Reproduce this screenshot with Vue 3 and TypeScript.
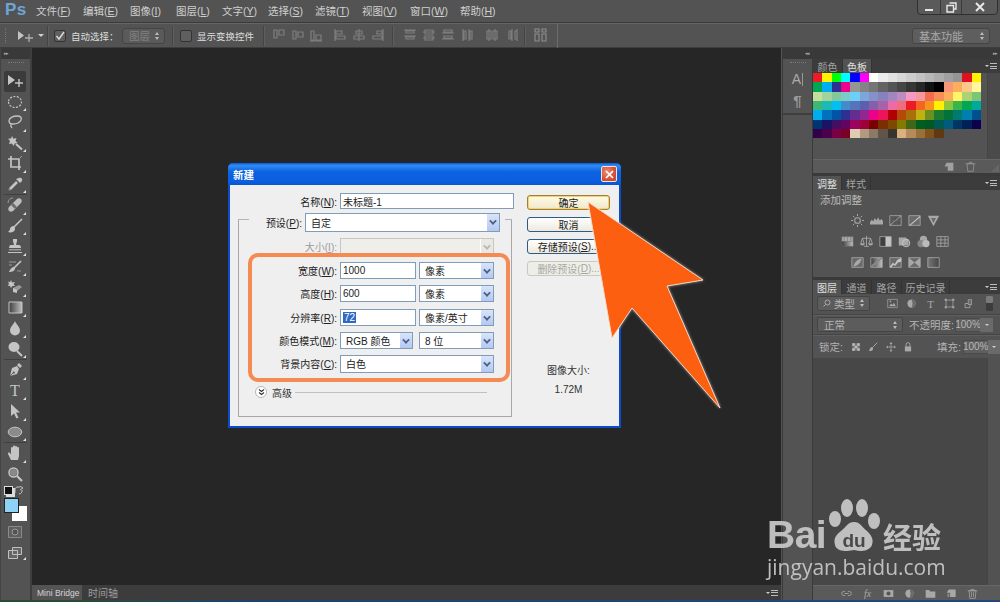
<script setup lang="ts">
type Shape = { d: string; fill?: string; stroke?: string; sw?: number; dash?: string; op?: number }
type Tool = { id: string; shapes: Shape[]; flyout?: boolean; active?: boolean; sepBefore?: boolean; label?: string }

const L = '#c4c4c4'
const M = '#9a9a9a'
const f = (d: string, fill = L, op = 1): Shape => ({ d, fill, op })
const s = (d: string, stroke = L, sw = 1.2, dash?: string): Shape => ({ d, stroke, sw, dash, fill: 'none' })
const oval = (cx: number, cy: number, rx: number, ry: number) =>
  `M${cx - rx} ${cy}a${rx} ${ry} 0 1 0 ${rx * 2} 0a${rx} ${ry} 0 1 0 ${-rx * 2} 0z`

const tools: Tool[] = [
  { id: 'move', active: true, shapes: [f('M1 2l7 5-7 5z'), s('M12 6v8M8 10h8', L, 1.4)] },
  { id: 'marquee', flyout: true, shapes: [s(oval(8, 8, 6.5, 5.5), L, 1.2, '2 1.4')] },
  { id: 'lasso', flyout: true, shapes: [s('M2 7c0-3 4-5 8-5s5 2 4 4-4 4-8 4c-3 0-4-1-4-3zM4 10c-1 2 0 3 1 4', L, 1.3)] },
  { id: 'wand', flyout: true, shapes: [f('M5 1l1.4 2.8L9.5 3 8.5 6l2.2 2-3 .5L6.5 11 5 8.6 2 9l1-3-2-2.2 3-.4z', L), s('M9 9l6 5.5', L, 2)] },
  { id: 'crop', flyout: true, shapes: [s('M4 1v11h10M1 4h11v11', L, 1.7), s('M12 4l3-3', M, 1)] },
  { id: 'dropper', flyout: true, sepBefore: false, shapes: [s('M3 13l7-7', L, 2.6), f('M9 3l4 4 2-2c1-2-1-4-3-3z'), s('M2 14l1-1', M, 2)] },
  { id: 'heal', flyout: true, sepBefore: true, shapes: [f('M2 10l8-8c1-1 3-1 4 0s1 3 0 4l-8 8c-1 1-3 1-4 0s-1-3 0-4z', '#bdbdbd'), f('M6 6l4 4-2 2-4-4z', '#6c6c6c'), s('M1 6c0-3 2-5 5-5', M, 1)] },
  { id: 'brush', flyout: true, shapes: [s('M15 1L7 9', L, 1.6), f('M7 8c-3 0-4 2-4 3s-1 2-2 3c3 1 7 0 7-3 0-1 0-2-1-3z')] },
  { id: 'stamp', flyout: true, shapes: [f('M6 1h4v2l-1 4h3c1 0 2 1 2 3H2c0-2 1-3 2-3h3L6 3z'), f('M2 11h12v1.5H2z', M), f('M1 14h14v1H1z', L)] },
  { id: 'history', flyout: true, shapes: [s('M14 2L7 9', L, 1.7), f('M7 8c-2 0-4 2-5 5 3 0 6-1 6-4z'), s('M2 3h7M2 6h3M10 12h4', M, 1.2)] },
  { id: 'eraser', flyout: true, shapes: [f('M6 9l6-3 3 2-5 4-4-1z', M), f('M6 9l4 2 0 3-4-1z', L), f('M4 1l1 2.4L8 3 6.6 5.2 8 7 5.3 7 4 9 3 7 0.6 6.6 2 5 1 2.6l2 .6z')] },
  { id: 'gradient', flyout: true, shapes: [{ d: 'M2 2h13v11H2z', fill: 'url(#grad)', stroke: L, sw: 1 }] },
  { id: 'drop', flyout: true, shapes: [f('M8 1c1 3 5 6 5 9.5A5 5 0 0 1 3 10.500C3 7 7 4 8 1z')] },
  { id: 'dodge', flyout: true, shapes: [f(oval(7, 6, 5.5, 5)), s('M10 10l5 5', L, 2)] },
  { id: 'pen', flyout: true, sepBefore: true, shapes: [f('M3 14l2-8 5-2 2 3-2 5z'), f('M10 3l2-2 3 3-2 2z'), f('M6.800 9.500a1 1 0 1 0 .1 0z', '#535353'), s('M3 14l4-4', '#535353', .8)] },
  { id: 'type', flyout: true, label: 'T', shapes: [] },
  { id: 'path', flyout: true, shapes: [f('M4 1l9 8.500H9l2.500 5-2 1-2.500-5L4 13z')] },
  { id: 'shape', flyout: true, shapes: [{ d: oval(8, 8, 6.800, 4.800), fill: '#8b8b8b', stroke: L, sw: 1 }] },
  { id: 'hand', flyout: true, sepBefore: true, shapes: [f('M4 15L1 9c-.5-1 1-2 2-1l1 1.500V3c0-1.500 2-1.500 2 0V1.500c0-1.500 2-1.500 2 0V2c0-1.400 2-1.400 2 0v1c0-1.400 2-1.400 2 0v8l-1 4z')] },
  { id: 'zoom', shapes: [s(oval(6.500, 6.500, 4.500, 4.500), L, 1.5), f(oval(6.500, 6.500, 3.500, 3.500), '#8a8a8a'), s('M10 10l5 5', L, 2.2)] },
]

const alignA = [
  'M2 2v8h3V2zM7 2h5v5H7z', 'M2 3v8h3V3zM5 7h1M7 4h5v5H7z', 'M2 3v9h3V3zM7 7h5v5H7zM1 13h12',
]
const alignIcons: { x: number; d: string }[] = [
  { x: 272, d: alignA[0] }, { x: 291, d: alignA[1] }, { x: 309, d: alignA[2] },
  { x: 333, d: 'M2 1v12M3 3h6v3H3zM3 8h9v3H3z' }, { x: 352, d: 'M7 1v12M4 3h6v3H4zM2 8h10v3H2z' }, { x: 371, d: 'M12 1v12M6 3h5v3H6zM2 8h9v3H2z' },
  { x: 403, d: 'M1 2h12M3 3h8v2H3zM1 8h12M3 9h8v2H3z' }, { x: 422, d: 'M1 4h12M3 2h8v4H3zM1 10h12M3 8h8v4H3z' }, { x: 441, d: 'M3 2h8v2H3zM1 5h12M3 8h8v2H3zM1 11h12' },
  { x: 461, d: 'M2 1v12M3 3h2v8H3zM8 1v12M9 3h2v8H9z' }, { x: 485, d: 'M4 1v12M2 3h4v8H2zM10 1v12M8 3h4v8H8z' }, { x: 504, d: 'M5 3h2v8H5zM8 1v12M11 3h2v8h-2zM13 1v12' },
]

const menus = [
  { t: '文件', k: 'F', w: 47 }, { t: '编辑', k: 'E', w: 47 }, { t: '图像', k: 'I', w: 46 }, { t: '图层', k: 'L', w: 46 },
  { t: '文字', k: 'Y', w: 46 }, { t: '选择', k: 'S', w: 47 }, { t: '滤镜', k: 'T', w: 47 }, { t: '视图', k: 'V', w: 48 },
  { t: '窗口', k: 'W', w: 50 }, { t: '帮助', k: 'H', w: 50 },
]

const swatches: string[] = (
  '#ed1c24 #fff200 #00ff00 #00ffff #0000ff #ff00ff #ffffff #ebebeb #e1e1e1 #d7d7d7 #cccccc #c2c2c2 #b7b7b7 #acacac #a0a0a0 #959595 #e01020 #fff200 ' +
  '#00a651 #00aeef #2e3192 #ec008c #959595 #848484 #757575 #636363 #555555 #464646 #363636 #262626 #111111 #000000 #f7977a #fbaf5d #fdc68a #fff799 ' +
  '#c4df9b #a3d39c #82ca9c #7accc8 #6dcff6 #7da7d9 #8393ca #8781bd #a187be #bc8cbf #f49ac2 #f5989d #f26c4f #f68e55 #fbaf5c #fff467 #acd372 #7cc576 ' +
  '#3bb878 #1abbb4 #00bff3 #438cca #5574b9 #5c5fb0 #855fa8 #a763a8 #ee6aa7 #f16d7e #ed1c24 #f26522 #f7941d #fff200 #8dc63f #39b54a #00a651 #00a99d ' +
  '#00aeef #0072bc #0054a6 #2e3192 #662d91 #92278f #ec008c #ed145b #b00000 #b44a0a #a8700a #c0b010 #6b9020 #1c7b30 #00723a #007a70 #0080b0 #005090 ' +
  '#003471 #1b1464 #440e62 #630460 #9e005d #9e0039 #790000 #7b2e00 #7d4900 #827b00 #406618 #005e20 #005826 #005952 #005b7f #003663 #002157 #0d004c ' +
  '#32004b #4b0049 #7b0046 #7a0026 #e0ccb0 #b09a80 #8b7a68 #625548 #38342e #d9b080 #b68b5b #9a7039 #80521f #603913'
).split(' ')

const G = '#a8a8a8'
const D = '#6a6a6a'
const adjRows: Shape[][][] = [
  [
    [s(oval(8, 8, 3.500, 3.500), G, 1.300), s('M8 0v2.500M8 13.500V16M0 8h2.500M13.500 8H16M2.300 2.300l1.800 1.800M11.900 11.900l1.800 1.800M2.300 13.700l1.800-1.800M11.900 4.100l1.800-1.800', G, 1.200)],
    [f('M0 13V10l2-3 2 2 2-4 2 3 2-4 2 4 2-2 2 3v4z', G)],
    [s('M1 2h14v12H1z', G, 1), s('M1 14L15 2', G, 1.200), s('M5 2v12M10 2v12M1 8h14', D, .7)],
    [f('M1 2h14v12H1z', D), s('M1 2h14v12H1z', G, 1), f('M1 14L15 2v2L3 14z', L)],
    [f('M1 2h14L8 15z', G), f('M5 5h6L8 11z', D)],
  ],
  [
    [f('M1 2h14v6H1z', G), { d: 'M1 8h14v6H1z', fill: 'url(#grad)' }, s('M1 2h14v12H1zM4 2v6M8 2v6M12 2v6', D, .6)],
    [s('M8 1v13M3 4h10M3 4L1 10M3 4l2 6M13 4l-2 6M13 4l2 6M5 14h6', G, 1.100), f('M0 10h6a3 3 0 0 1-6 0zM10 10h6a3 3 0 0 1-6 0z', G)],
    [f('M1 2h7v12H1z', '#3f3f3f'), f('M8 2h7v12H8z', L), s('M1 2h14v12H1z', G, 1)],
    [f('M1 3h9l1 2h2v8H1z', G), s(oval(10, 10, 4.500, 4.500), L, 1.200)],
    [f(oval(8, 5.500, 4.500, 4.500), G), f(oval(5, 10.500, 4.500, 4.500), '#888'), f(oval(11, 10.500, 4.500, 4.500), '#bbb')],
    [s('M1 2h14v12H1zM1 6h14M1 10h14M6 2v12M11 2v12', G, 1)],
  ],
  [
    [f('M1 2h14v12H1z', D), s('M1 2h14v12H1z', G, 1), f('M3 13c1-5 5-9 10-10-1 5-4 9-10 10z', G)],
    [{ d: 'M1 2h14v12H1z', fill: 'url(#grad)', stroke: G, sw: 1 }, f('M1 12L13 2h2v1L3 14H1z', '#888')],
    [f('M1 2h14v12H1z', D), s('M1 2h14v12H1z', G, 1), f('M1 13l4-5 2 2 3-5 5-3v5l-4 1-3 4-3-1-2 3H1z', L)],
    [f('M1 2h14v12H1z', D), s('M1 2h14v12H1z', G, 1), f('M1 2l7 6 7-6v12L8 8l-7 6z', G)],
    [{ d: 'M1 2h14v12H1z', fill: 'url(#grad2)', stroke: G, sw: 1 }],
  ],
]

const layerFilters: Shape[][] = [
  [s('M1 2h14v12H1z', G, 1), f('M3 12l3-4 2 2 2-3 3 5z', G), f(oval(5, 5, 1.300, 1.300), G)],
  [f(oval(8, 8, 6, 6), G), f('M8 2a6 6 0 0 1 0 12c2-3 2-8 0-12z', D)],
  [],
  [s('M3 3h10v10H3z', G, 1.100), f('M1 1h3v3H1zM12 1h3v3h-3zM1 12h3v3H1zM12 12h3v3h-3z', G)],
  [s('M3 8h7v6H3z', G, 1.200), f('M7 2h6v8H7z', G), f('M8 3h4v6H8z', D)],
]

const locks: Shape[][] = [
  [f('M2 2h12v12H2z', '#7a7a7a'), f('M2 2h4v4H2zM10 2h4v4h-4zM6 6h4v4H6zM2 10h4v4H2zM10 10h4v4h-4z', '#bdbdbd')],
  [s('M15 1L7 9', G, 1.500), f('M7 8c-3 0-4 2-4 3s-1 2-2 3c3 1 7 0 7-3 0-1 0-2-1-3z', G)],
  [s('M8 2v12M2 8h12', G, 1.200), f('M8 0l2.500 3h-5zM8 16l2.500-3h-5zM0 8l3-2.500v5zM16 8l-3-2.500v5z', G)],
  [f('M3 7h10v8H3z', G), s('M5 7V4a3 3 0 0 1 6 0v3', G, 1.500)],
]

const footerIcons: Shape[][] = [
  [s('M6 5H4a3 3 0 0 0 0 6h2M10 5h2a3 3 0 0 1 0 6h-2M5 8h6', G, 1.200)],
  [],
  [f('M1 3h14v10H1z', G), f(oval(8, 8, 3, 3), '#555')],
  [f(oval(8, 8, 6, 6), G), f('M8 2a6 6 0 0 1 0 12c2-3 2-8 0-12z', D)],
  [f('M1 3h5l1.500 2H15v9H1z', G)],
  [f('M4 2h10v11H6V7H1z', G), f('M2 8h3v5H2z', '#888')],
  [s('M3 4h10l-1 11H4zM1 4h14M6 4V2h4v2M6.500 6v7M9.500 6v7', G, 1.100)],
]
</script>

<template>
  <div class="app">
    <svg class="defs" width="0" height="0" aria-hidden="true">
      <defs>
        <linearGradient id="grad" x1="0" y1="0" x2="1" y2="0"><stop offset="0" stop-color="#3e3e3e" /><stop offset="1" stop-color="#c0c0c0" /></linearGradient>
        <linearGradient id="grad2" x1="0" y1="0" x2="1" y2="0"><stop offset="0" stop-color="#777" /><stop offset="1" stop-color="#444" /></linearGradient>
      </defs>
    </svg>

    <header class="menubar">
      <span class="ps">Ps</span>
      <nav class="menus">
        <span v-for="m in menus" :key="m.k + m.t" class="menu" :style="{ width: m.w + 'px' }">{{ m.t }}(<u>{{ m.k }}</u>)</span>
      </nav>
      <div class="winctl">
        <span class="wbtn"><i class="w-min"></i></span>
        <span class="wbtn narrow">
          <svg width="11" height="11" viewBox="0 0 11 11"><path d="M3.500 1h6.500v6H7.500M1 3.500h6.500V10H1z" fill="none" stroke="#e8e8e8" stroke-width="1.400" /></svg>
        </span>
        <span class="wbtn wide">
          <svg width="10" height="10" viewBox="0 0 10 10"><path d="M1 1l8 8M9 1l-8 8" stroke="#e8e8e8" stroke-width="2" /></svg>
        </span>
      </div>
    </header>

    <div class="options">
      <i class="grip-v"></i>
      <svg class="opt-move" width="15" height="12" viewBox="0 0 15 12"><path d="M0 1l6 4.500-6 4.500z" fill="#c4c4c4" /><path d="M11 4v8M7 8h8" stroke="#b0b0b0" stroke-width="1.300" /></svg>
      <i class="caret"></i>
      <i class="vsep s1"></i>
      <span class="check on">
        <svg width="10" height="10" viewBox="0 0 10 10"><path d="M1.500 5l2.500 3 5-7" fill="none" stroke="#dcdcdc" stroke-width="1.400" /></svg>
      </span>
      <span class="opt-label l1">自动选择：</span>
      <span class="opt-select dim s-layer">图层<i class="updown"></i></span>
      <i class="vsep s2"></i>
      <span class="check"></span>
      <span class="opt-label l2">显示变换控件</span>
      <i class="vsep s3"></i>
      <div class="aligns">
        <svg v-for="a in alignIcons" :key="a.x" class="align" :style="{ left: a.x + 'px' }" width="14" height="14" viewBox="0 0 14 14">
          <path :d="a.d" fill="none" stroke="#7e7e7e" stroke-width="1.200" />
        </svg>
        <i class="vsep abs" style="left: 392px"></i>
        <i class="vsep abs" style="left: 524px"></i>
        <svg class="align" style="left: 534px" width="13" height="14" viewBox="0 0 13 14"><path d="M1 1h4v3H1zM8 1h4v3H8zM1 6h4v7H1zM8 6h4v7H8z" fill="none" stroke="#909090" stroke-width="1.100" /></svg>
        <i class="vsep abs bright" style="left: 557px"></i>
      </div>
      <span class="opt-select workspace-select">基本功能<i class="updown"></i></span>
    </div>

    <div class="workspace">
      <aside class="toolbar">
        <div class="strip"><span class="chev">▸▸</span></div>
        <i class="grip-h"></i>
        <div class="tools">
          <template v-for="t in tools" :key="t.id">
            <i v-if="t.sepBefore" class="tool-sep"></i>
            <div class="tool" :class="{ active: t.active }">
              <span v-if="t.label" class="tool-t">{{ t.label }}</span>
              <svg v-else width="16" height="16" viewBox="0 0 16 16">
                <path v-for="(p, i) in t.shapes" :key="i" :d="p.d" :fill="p.fill" :stroke="p.stroke" :stroke-width="p.sw" :stroke-dasharray="p.dash" :opacity="p.op" />
              </svg>
              <i v-if="t.flyout" class="flyout"></i>
            </div>
          </template>
        </div>
        <div class="swap">
          <span class="mini-def"></span>
          <svg width="10" height="9" viewBox="0 0 10 9"><path d="M1 7V4c0-2 1-3 3-3h2M6 0l3 2-3 2M8 4v1c0 1-1 3-3 3" fill="none" stroke="#c4c4c4" stroke-width="1" /></svg>
        </div>
        <div class="colors"><span class="bg-c"></span><span class="fg-c"></span></div>
        <div class="tool-bottom qm"><svg width="14" height="12" viewBox="0 0 14 12"><path d="M.5.500h13v11H.5z" fill="#5e5e5e" stroke="#8a8a8a" /><circle cx="7" cy="6" r="3" fill="#535353" stroke="#9a9a9a" /></svg></div>
        <div class="tool-bottom sm"><svg width="14" height="12" viewBox="0 0 14 12"><path d="M4.500.500h9v7h-9zM.5 3.500h9v8h-9z" fill="#666" stroke="#c0c0c0" /></svg><i class="flyout"></i></div>
      </aside>

      <main class="doc">
        <div class="canvas"></div>
        <div class="doc-tabs">
          <span class="doc-tab active">Mini Bridge</span>
          <span class="doc-tab cn">时间轴</span>
          <span class="doc-menu"><i class="caret small"></i><i class="bars"></i></span>
        </div>
      </main>

      <aside class="dock">
        <div class="strip right"><span class="chev">◂◂</span></div>
        <div class="dock-group">
          <i class="grip-h dock-grip"></i>
          <span class="dock-a">A<i></i></span>
          <span class="dock-p">¶</span>
        </div>
      </aside>

      <section class="panels">
        <div class="strip right"><span class="chev">▸▸</span></div>
        <div class="panel swatch-panel">
          <div class="tabs">
            <span class="tab" style="width: 30px">颜色</span>
            <span class="tab active" style="width: 29px">色板</span>
            <span class="panel-menu"><i class="caret small"></i><i class="bars"></i></span>
          </div>
          <div class="swatch-body">
            <div class="swatches">
              <i v-for="(c, i) in swatches" :key="i" :style="{ background: c }"></i>
            </div>
            <div class="scroll"></div>
          </div>
          <div class="panel-foot">
            <svg width="10" height="10" viewBox="0 0 16 16"><path d="M4 1h11v13H6V7H1z" fill="#a0a0a0" /></svg>
            <svg width="11" height="11" viewBox="0 0 16 16"><path d="M3 4h10l-1 11H4zM1 4h14M6 4V2h4v2" fill="none" stroke="#909090" stroke-width="1.300" /></svg>
            <i class="corner"></i>
          </div>
        </div>

        <div class="panel adj-panel">
          <div class="tabs">
            <span class="tab active" style="width: 29px">调整</span>
            <span class="tab" style="width: 29px">样式</span>
            <span class="panel-menu"><i class="caret small"></i><i class="bars"></i></span>
          </div>
          <div class="adj-title">添加调整</div>
          <div v-for="(row, r) in adjRows" :key="r" class="adj-row">
            <svg v-for="(ic, i) in row" :key="i" width="13" height="13" viewBox="0 0 16 16">
              <path v-for="(p, j) in ic" :key="j" :d="p.d" :fill="p.fill" :stroke="p.stroke" :stroke-width="p.sw" />
            </svg>
          </div>
        </div>

        <div class="panel layers-panel">
          <div class="tabs">
            <span class="tab active" style="width: 29px">图层</span>
            <span class="tab" style="width: 30px">通道</span>
            <span class="tab" style="width: 30px">路径</span>
            <span class="tab" style="width: 48px">历史记录</span>
            <span class="panel-menu"><i class="caret small"></i><i class="bars"></i></span>
          </div>
          <div class="layer-row filter">
            <span class="p-select filter-sel">
              <svg width="8" height="8" viewBox="0 0 8 8"><circle cx="4.500" cy="3.500" r="2.500" fill="none" stroke="#aaa" /><path d="M2.500 5.500L0.500 7.500" stroke="#aaa" /></svg>
              类型<i class="updown"></i>
            </span>
            <div class="filter-icons">
              <svg v-for="(ic, i) in layerFilters" :key="i" width="11" height="11" viewBox="0 0 16 16">
                <text v-if="i === 2" x="8" y="14" text-anchor="middle" class="svg-t">T</text>
                <path v-for="(p, j) in ic" :key="j" :d="p.d" :fill="p.fill" :stroke="p.stroke" :stroke-width="p.sw" />
              </svg>
            </div>
            <span class="toggle"><i></i></span>
          </div>
          <div class="layer-row blend">
            <span class="p-select blend-sel">正常<i class="updown"></i></span>
            <span class="p-label">不透明度:</span>
            <span class="p-num">100%</span><span class="p-drop"><i class="caret small"></i></span>
          </div>
          <div class="layer-row lock">
            <span class="p-label lock-l">锁定:</span>
            <div class="lock-icons">
              <svg v-for="(ic, i) in locks" :key="i" width="10" height="10" viewBox="0 0 16 16">
                <path v-for="(p, j) in ic" :key="j" :d="p.d" :fill="p.fill" :stroke="p.stroke" :stroke-width="p.sw" />
              </svg>
            </div>
            <span class="p-label fill-l">填充:</span>
            <span class="p-num">100%</span><span class="p-drop"><i class="caret small"></i></span>
          </div>
          <div class="layer-list"><div class="list-main"></div><div class="scroll dark"></div></div>
          <div class="layer-foot">
            <template v-for="(ic, i) in footerIcons" :key="i">
              <span v-if="i === 1" class="fx">fx</span>
              <svg v-else width="11" height="11" viewBox="0 0 16 16">
                <path v-for="(p, j) in ic" :key="j" :d="p.d" :fill="p.fill" :stroke="p.stroke" :stroke-width="p.sw" />
              </svg>
            </template>
          </div>
        </div>
      </section>
    </div>
    <div class="taskline"></div>

    <!-- New document dialog -->
    <div class="dialog">
      <div class="dlg-title">
        <span>新建</span>
        <span class="dlg-close">
          <svg width="9" height="9" viewBox="0 0 9 9"><path d="M1 1l7 7M8 1l-7 7" stroke="#fff" stroke-width="1.700" /></svg>
        </span>
      </div>
      <div class="dlg-body">
        <div class="dlg-form">
          <div class="row name-row">
            <label class="lbl">名称(<u>N</u>):</label>
            <span class="input name-input">未标题-1</span>
          </div>
          <div class="group">
            <div class="row preset-row">
              <label class="lbl">预设(<u>P</u>):</label>
              <span class="select preset-sel"><b>自定</b><i class="chev-btn"></i></span>
            </div>
            <div class="rows">
              <div class="row">
                <label class="lbl off">大小(<u>I</u>):</label>
                <span class="select off-sel"><b></b><i class="chev-btn off-btn"></i></span>
              </div>
              <div class="row">
                <label class="lbl">宽度(<u>W</u>):</label>
                <span class="input num">1000</span>
                <span class="select unit"><b>像素</b><i class="chev-btn"></i></span>
              </div>
              <div class="row">
                <label class="lbl">高度(<u>H</u>):</label>
                <span class="input num">600</span>
                <span class="select unit"><b>像素</b><i class="chev-btn"></i></span>
              </div>
              <div class="row">
                <label class="lbl">分辨率(<u>R</u>):</label>
                <span class="input num"><mark>72</mark></span>
                <span class="select unit"><b>像素/英寸</b><i class="chev-btn"></i></span>
              </div>
              <div class="row">
                <label class="lbl">颜色模式(<u>M</u>):</label>
                <span class="select mode"><b>RGB 颜色</b><i class="chev-btn"></i></span>
                <span class="select unit mode-bit"><b>8 位</b><i class="chev-btn"></i></span>
              </div>
              <div class="row">
                <label class="lbl">背景内容(<u>C</u>):</label>
                <span class="select wide-sel"><b>白色</b><i class="chev-btn"></i></span>
              </div>
            </div>
            <div class="adv">
              <span class="adv-btn"><svg width="7" height="7" viewBox="0 0 7 7"><path d="M1 .5l2.500 2 2.500-2M1 3.500l2.500 2 2.500-2" fill="none" stroke="#333" stroke-width="1.100" /></svg></span>
              <span class="adv-text">高级</span>
              <i class="adv-line"></i>
            </div>
          </div>
        </div>
        <div class="dlg-side">
          <span class="btn primary">确定</span>
          <span class="btn">取消</span>
          <span class="btn">存储预设(<u>S</u>)...</span>
          <span class="btn disabled">删除预设(<u>D</u>)...</span>
          <div class="size-info">
            <div>图像大小:</div>
            <div class="size-val">1.72M</div>
          </div>
        </div>
      </div>
    </div>

    <!-- Annotations drawn over the screenshot -->
    <svg class="annot" width="1000" height="602" viewBox="0 0 1000 602">
      <rect x="250" y="255" width="258" height="125" rx="8" fill="none" stroke="#f58a52" stroke-width="4" />
      <polygon class="arrow" points="588,202 703,280 667,286 720,408 632,308 612,338" />
    </svg>

    <!-- Watermark -->
    <div class="mark">
      <div class="mark-top">
        <span class="mark-bai">Bai</span>
        <svg class="paw" width="52" height="58" viewBox="0 0 52 58">
          <ellipse cx="7" cy="24" rx="6" ry="8" />
          <ellipse cx="19" cy="13" rx="6" ry="9" />
          <ellipse cx="34" cy="13" rx="6" ry="9" />
          <ellipse cx="46" cy="26" rx="6" ry="8" />
          <path d="M26 27c6 0 8 5 13 9 4 4 7 8 5 14-2 5-8 6-12 6-3 0-4-1-6-1s-4 1-7 1c-5 0-11-1-12-6-2-7 2-11 6-14 5-4 7-9 13-9z" />
          <text x="26" y="52" text-anchor="middle" class="paw-du">du</text>
        </svg>
        <span class="mark-cn">经验</span>
      </div>
      <div class="mark-url">jingyan.baidu.com</div>
    </div>
  </div>
</template>

<style>
html, body { margin: 0; padding: 0; background: #262626; }
</style>

<style scoped>
.app {
  position: relative;
  width: 1000px;
  height: 602px;
  overflow: hidden;
  display: flex;
  flex-direction: column;
  background: #535353;
  color: #c8c8c8;
  font-family: "Liberation Sans", "Noto Sans CJK SC", sans-serif;
  font-size: 10px;
}
.defs { position: absolute; }
i { display: block; font-style: normal; }
u { text-decoration: underline; }

/* menu bar */
.menubar {
  height: 22px;
  flex: none;
  display: flex;
  align-items: center;
  background: #535353;
  border-bottom: 1px solid #3a3a3a;
  position: relative;
}
.ps { width: 36px; padding-left: 5px; box-sizing: border-box; color: #6fa5d6; font: bold 17px "Liberation Sans", sans-serif; letter-spacing: 0.5px; margin-top: -2px; }
.menus { display: flex; margin-top: -2px; }
.menu { color: #cfcfcf; font-size: 10.500px; white-space: nowrap; }
.winctl {
  position: absolute;
  left: 917px;
  top: -1px;
  width: 81px;
  height: 16px;
  display: flex;
  background: #5a5a5a;
  border: 1px solid #303030;
  border-radius: 0 0 4px 4px;
  box-sizing: border-box;
}
.wbtn { width: 22px; display: flex; align-items: center; justify-content: center; border-right: 1px solid #3a3a3a; }
.wbtn.narrow { width: 20px; }
.wbtn.wide { flex: 1; border-right: 0; }
.w-min { width: 8px; height: 2px; background: #e8e8e8; margin-top: 5px; }

/* options */
.options {
  height: 25px;
  flex: none;
  position: relative;
  background: #535353;
  border-top: 1px solid #666;
  border-bottom: 1px solid #3c3c3c;
  box-sizing: border-box;
  display: flex;
  align-items: center;
}
.grip-v { width: 2px; height: 15px; margin-left: 5px; border-left: 1px dotted #777; }
.opt-move { margin-left: 10px; }
.caret { width: 0; height: 0; border: 3px solid transparent; border-top: 3px solid #d0d0d0; border-bottom: 0; margin-left: 5px; }
.caret.small { border-width: 2.500px; border-top-color: #d0d0d0; border-bottom: 0; margin: 0; }
.vsep { width: 1px; height: 20px; background: #444; box-shadow: 1px 0 0 #5f5f5f; }
.vsep.s1 { margin-left: 3px; }
.vsep.s2 { margin-left: 7px; }
.vsep.s3 { margin-left: 9px; }
.vsep.abs { position: absolute; top: 2px; }
.vsep.bright { background: #6c6c6c; height: 25px; top: -1px; box-shadow: none; }
.check {
  width: 10px; height: 10px; margin-left: 6px;
  border: 1px solid #333; border-radius: 2px; background: #5f5f5f;
  display: flex; align-items: center; justify-content: center; flex: none;
}
.options > .check:not(.on) { margin-left: 7px; }
.opt-label { color: #dedede; font-size: 9.500px; white-space: nowrap; }
.l1 { margin-left: 5px; width: 51px; flex: none; }
.l2 { margin-left: 5px; }
.opt-select {
  height: 16px; box-sizing: border-box;
  border: 1px solid #444; border-radius: 3px; background: #5a5a5a;
  display: flex; align-items: center; padding-left: 6px; font-size: 10.500px; position: relative;
}
.s-layer { width: 43px; color: #808080; flex: none; }
.workspace-select { position: absolute; left: 912px; top: 4px; width: 78px; color: #a8a8a8; font-size: 11px; background: #5e5e5e; }
.updown { position: absolute; right: 5px; top: 50%; margin-top: -4px; width: 0; height: 8px; border-left: 2px solid transparent; border-right: 2px solid transparent; }
.updown::before, .updown::after { content: ""; position: absolute; left: -2px; border-left: 2px solid transparent; border-right: 2px solid transparent; }
.updown::before { top: 0; border-bottom: 3px solid #bbb; }
.updown::after { bottom: 0; border-top: 3px solid #bbb; }
.aligns { position: absolute; left: 0; top: 0; width: 600px; height: 23px; }
.align { position: absolute; top: 4px; }

/* workspace */
.workspace { flex: 1; display: flex; min-height: 0; }
.strip {
  height: 11px; background: #393939; flex: none; display: flex; align-items: center;
  padding: 0 3px; color: #aaa; box-sizing: border-box;
}
.strip.right { justify-content: flex-end; }
.chev { font-size: 5px; letter-spacing: -1px; line-height: 1; }

/* toolbar */
.toolbar {
  width: 29px; flex: none; display: flex; flex-direction: column;
  background: #535353; border-left: 1px solid #444; border-right: 2px solid #3e3e3e; box-sizing: content-box;
}
.grip-h { width: 16px; height: 2px; margin: 3px auto 0; border-top: 1px dotted #7a7a7a; flex: none; }
.tools { margin-top: 6px; display: flex; flex-direction: column; }
.tool {
  width: 22px; height: 20.500px; margin-left: 3px; flex: none; position: relative;
  display: flex; align-items: center; justify-content: center; box-sizing: border-box;
}
.tool.active { background: #3b3b3b; border-radius: 2px; }
.tool-sep { height: 1px; margin: 0 3px; background: #3f3f3f; flex: none; }
.tools .tool-sep { margin-top: 0; }
.tool-t { color: #c4c4c4; font: 16px "Liberation Serif", serif; line-height: 1; }
.flyout { position: absolute; right: 0; bottom: 1px; width: 0; height: 0; border-left: 3px solid transparent; border-bottom: 3px solid #e0e0e0; }
.swap { margin-top: 1px; padding: 0 6px 0 3px; display: flex; justify-content: space-between; align-items: center; height: 10px; }
.mini-def { width: 7px; height: 7px; background: #111; border: 1px solid #ddd; box-shadow: 2px 2px 0 #ddd; }
.colors { position: relative; height: 24px; margin-top: 3px; flex: none; }
.fg-c { position: absolute; left: 3px; top: 0; width: 13px; height: 13px; background: #8ed2f8; border: 1px solid #222; }
.bg-c { position: absolute; left: 11px; top: 8px; width: 15px; height: 15px; background: #fff; }
.tool-bottom { position: relative; margin-left: 7px; width: 18px; height: 14px; flex: none; }
.qm { margin-top: 4px; }
.sm { margin-top: 7px; }

/* doc */
.doc { flex: 1; display: flex; flex-direction: column; min-width: 0; }
.canvas { flex: 1; background: #262626; }
.doc-tabs {
  height: 15px; flex: none; background: #3c3c3c; display: flex; align-items: stretch; position: relative;
}
.doc-tab { padding: 0 5px; display: flex; align-items: center; color: #9c9c9c; font-size: 8.500px; margin-right: 1px; }
.doc-tab.cn { font-size: 10px; }
.doc-tab.active { background: #535353; color: #d4d4d4; padding: 0 5px; width: 50px; box-sizing: border-box; white-space: nowrap; }
.doc-menu, .panel-menu { position: absolute; right: 3px; top: 50%; margin-top: -3px; display: flex; align-items: center; gap: 1px; }
.bars { width: 7px; height: 6px; border-top: 1px solid #bbb; border-bottom: 1px solid #bbb; position: relative; box-sizing: border-box; }
.bars::after { content: ""; position: absolute; left: 0; right: 0; top: 1.500px; height: 1px; background: #bbb; }

/* dock */
.dock { width: 31px; flex: none; background: #535353; border-left: 1px solid #3a3a3a; border-right: 1px solid #3a3a3a; display: flex; flex-direction: column; box-sizing: border-box; margin-left: 1px; }
.dock-group { height: 54px; border-bottom: 2px solid #3f3f3f; display: flex; flex-direction: column; align-items: center; }
.dock-grip { margin-top: 3px; }
.dock-a { font: 14px "Liberation Sans", sans-serif; color: #aaa; margin-top: 5px; display: flex; height: 18px; align-items: center; }
.dock-a i { width: 1px; height: 13px; background: #999; margin-left: 1px; }
.dock-p { font: bold 15px "Liberation Sans", sans-serif; color: #9a9a9a; margin-top: 4px; }

/* panels */
.panels { width: 187px; flex: none; display: flex; flex-direction: column; background: #3a3a3a; }
.panel { background: #535353; position: relative; flex: none; }
.tabs { height: 14px; background: #3c3c3c; display: flex; position: relative; }
.tab { display: flex; align-items: center; justify-content: center; color: #a4a4a4; font-size: 10px; box-sizing: border-box; border-right: 1px solid #333; white-space: nowrap; }
.tab.active { background: #535353; color: #e0e0e0; }
.swatch-body { display: flex; height: 86px; }
.swatches { width: 174px; display: grid; grid-template-columns: repeat(18, 9.330px); grid-auto-rows: 9.330px; align-content: start; }
.swatches i { display: block; }
.scroll { width: 13px; margin-left: auto; background: #4a4a4a; border-left: 1px solid #454545; box-sizing: border-box; }
.panel-foot { height: 14px; background: #5a5a5a; border-top: 1px solid #666; display: flex; align-items: center; justify-content: flex-end; gap: 11px; padding-right: 24px; position: relative; box-sizing: border-box; }
.corner { position: absolute; right: 1px; bottom: 1px; width: 0; height: 0; border-left: 8px solid transparent; border-bottom: 8px solid #666; }
.adj-panel { height: 101px; margin-top: 3px; padding-right: 0; }
.adj-title { color: #bbb; font-size: 10.500px; padding: 2px 0 0 7px; height: 20px; box-sizing: border-box; }
.adj-row { display: flex; justify-content: center; gap: 6px; padding-right: 23px; height: 21px; align-items: center; }
.layers-panel { flex: 1; margin-top: 3px; display: flex; flex-direction: column; min-height: 0; }
.layer-row { display: flex; align-items: center; position: relative; flex: none; border-bottom: 1px solid #444; box-shadow: 0 1px 0 #5f5f5f; box-sizing: border-box; }
.filter { height: 21px; padding: 0 0 2px 4px; }
.blend { height: 20px; padding-left: 4px; }
.lock { height: 23px; border-bottom: 0; box-shadow: none; padding-left: 6px; }
.p-select { height: 15px; border: 1px solid #444; border-radius: 2px; background: #5c5c5c; color: #b4b4b4; box-sizing: border-box; display: flex; align-items: center; position: relative; font-size: 10.500px; gap: 3px; padding-left: 5px; }
.filter-sel { width: 53px; }
.blend-sel { width: 86px; padding-left: 6px; }
.filter-icons { display: flex; gap: 8px; margin-left: 17px; align-items: center; }
.svg-t { fill: #a8a8a8; font: 16px "Liberation Serif", serif; }
.toggle { width: 7px; height: 15px; background: #3c3c3c; border-radius: 1px; margin-left: 12px; }
.toggle i { height: 7px; background: #7a7a7a; border-radius: 1px; }
.p-label { color: #b4b4b4; font-size: 10.500px; white-space: nowrap; }
.blend .p-label { margin-left: 6px; width: 46px; }
.p-num { width: 25px; height: 14px; background: #5f5f5f; color: #b8b8b8; font-size: 10px; display: flex; align-items: center; justify-content: center; box-sizing: border-box; border: 1px solid #4a4a4a; border-right: 0; }
.p-drop { width: 13px; height: 14px; background: #6a6a6a; display: flex; align-items: center; justify-content: center; }
.lock-l { width: 27px; }
.lock-icons { display: flex; gap: 7.500px; align-items: center; margin-left: 6px; }
.fill-l { margin-left: 24px; width: 27px; }
.layer-list { flex: 1; display: flex; min-height: 0; }
.list-main { flex: 1; background: #474747; }
.scroll.dark { background: #525252; }
.layer-foot { height: 15px; flex: none; background: #5a5a5a; border-top: 1px solid #666; display: flex; align-items: center; justify-content: flex-end; box-sizing: border-box; gap: 10px; padding-right: 22px; }
.fx { font: italic 10px "Liberation Serif", serif; color: #a8a8a8; width: 11px; text-align: center; }
.taskline { height: 2px; flex: none; background: linear-gradient(90deg, #2a4a38 0, #2a4a38 8%, #22406e 25%, #24467c 100%); }

/* dialog */
.dialog {
  position: absolute;
  left: 228px;
  top: 163px;
  width: 393px;
  height: 265px;
  display: flex;
  flex-direction: column;
  background: #0a4ccc;
  border-radius: 5px 5px 0 0;
  box-sizing: border-box;
  padding: 0 2px 2px;
  color: #222;
  font-size: 10px;
}
.dlg-title {
  height: 22px; flex: none; margin: 0 -2px; padding: 0 4px 0 5px;
  background: linear-gradient(180deg, #0a5ddc 0, #2f8bf4 12%, #0c62e0 40%, #0a5ee0 85%, #0a54cc 100%);
  border-radius: 5px 5px 0 0;
  display: flex; align-items: center; justify-content: space-between;
  color: #fff; font-weight: bold; font-size: 10.500px;
}
.dlg-close {
  width: 16px; height: 16px; box-sizing: border-box; border: 1px solid #f0e4e0; border-radius: 2px;
  background: radial-gradient(circle at 35% 35%, #ec8d75, #d2492c 70%);
  display: flex; align-items: center; justify-content: center;
}
.dlg-body { flex: 1; background: #efefef; display: flex; min-height: 0; }
.dlg-form { width: 297px; flex: none; padding: 8px 0 0 0; box-sizing: border-box; }
.row { display: flex; align-items: center; height: 17px; }
.lbl { display: block; flex: none; text-align: right; white-space: nowrap; font-size: 10px; color: #222; }
.lbl.off { color: #9c9c9c; }
.name-row { height: 16px; }
.name-row .lbl { width: 107px; margin-right: 3px; }
.input, .select {
  height: 100%; box-sizing: border-box; background: #fff; border: 1px solid #7f9db9; display: flex; align-items: center; flex: none;
  color: #222; font-size: 10px; font-family: "Liberation Sans", "Noto Sans CJK SC", sans-serif;
}
.input { padding-left: 2px; }
.name-input { width: 174px; }
.select b { flex: 1; font-weight: normal; padding-left: 5px; white-space: nowrap; }
.chev-btn { width: 13px; height: 100%; flex: none; background: linear-gradient(180deg, #d8e4fa, #b4c8f2); position: relative; border-left: 1px solid #fff; box-sizing: border-box; }
.chev-btn::after {
  content: ""; position: absolute; left: 3px; top: 4px; width: 4px; height: 4px;
  border-right: 2px solid #4d6185; border-bottom: 2px solid #4d6185; transform: rotate(45deg) scale(.9);
}
.group {
  margin: 10px 0 0 8px; width: 274px; height: 198px; box-sizing: border-box; border: 1px solid #a8a8a8; border-top-color: #b4b4b4; display: flex; flex-direction: column;
}
.preset-row { height: 19px; margin: -7px 0 0 10px; width: 256px; background: #efefef; flex: none; }
.preset-row .lbl { width: 53px; margin-right: 3px; }
.preset-sel { width: 195px; }
.rows { display: flex; flex-direction: column; gap: 6.250px; margin-top: 6px; }
.rows .lbl { width: 98px; margin-right: 3px; }
.rows .row:first-child { margin-bottom: 0.750px; }
.off-sel { width: 154px; border-color: #c8c8c0; background: #eeeeea; }
.off-btn { background: #e8e8e4; }
.off-btn::after { border-color: #b8b8b0; }
.num { width: 76px; }
.num mark { background: #3168c4; color: #fff; padding: 0 1px; }
.unit { width: 75px; margin-left: 3px; }
.mode { width: 73px; }
.mode-bit { margin-left: 6px; }
.wide-sel { width: 154px; height: 18px; }
.wide-sel b { padding-left: 5px; }
.adv { display: flex; align-items: center; height: 14px; margin-top: 13px; padding-left: 16px; }
.adv-btn { width: 12px; height: 12px; border-radius: 50%; background: #fff; border: 1px solid #b8b8b8; box-sizing: border-box; display: flex; align-items: center; justify-content: center; flex: none; }
.adv-text { margin-left: 5px; color: #333; font-size: 10px; width: 20px; flex: none; white-space: nowrap; }
.adv-line { width: 192px; height: 1px; margin-left: 3px; background: #c0c0c0; }
.dlg-side { width: 83px; padding-top: 10px; display: flex; flex-direction: column; gap: 7.600px; box-sizing: content-box; }
.btn {
  height: 14.500px; box-sizing: border-box; border: 1px solid #2e5a84; border-radius: 3px; background: linear-gradient(180deg, #fff, #ece9de);
  display: flex; align-items: center; justify-content: center; color: #222; font-size: 10px; white-space: nowrap;
}
.btn.primary { border-color: #a08038; box-shadow: inset 0 0 0 1px #f8d070; background: linear-gradient(180deg, #fffbe8, #f0e8c8); }
.btn.disabled { border-color: #c8c8c0; color: #a8a8a0; background: #eeeee8; }
.size-info { margin-top: auto; margin-bottom: 27px; text-align: center; color: #333; font-size: 10px; line-height: 19px; }

/* annotations */
.annot { position: absolute; left: 0; top: 0; pointer-events: none; }
.arrow { fill: #fb5f0f; stroke: #f5d6c2; stroke-width: 1; filter: drop-shadow(0 0 1.500px rgba(255, 255, 255, .55)); }

/* watermark */
.mark { position: absolute; left: 767px; top: 495px; width: 190px; color: #c6c6c6; pointer-events: none; opacity: .95; }
.mark-top { display: flex; align-items: flex-end; height: 58px; }
.mark-bai { font: bold 39px/36px "Liberation Sans", sans-serif; letter-spacing: -.5px; width: 61px; }
.paw { fill: #c6c6c6; margin-left: 0; flex: none; }
.paw-du { fill: #4a4a4a; font: bold 19px "Liberation Sans", sans-serif; }
.mark-cn { font: bold 29px/33px "Noto Sans CJK SC", sans-serif; margin-left: 3px; white-space: nowrap; }
.mark-url { font: 21px/24px "Open Sans", "Liberation Sans", sans-serif; margin-top: 2px; white-space: nowrap; }
</style>
